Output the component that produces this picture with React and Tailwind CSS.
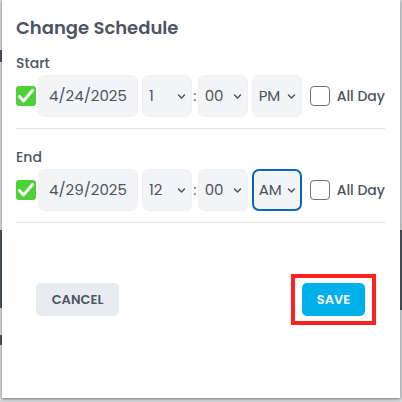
import React from "react";

const font = { fontFamily: "Poppins, 'Open Sans', 'DejaVu Sans', sans-serif" };

function Chevron() {
  return (
    <svg width="9" height="9" viewBox="0 0 9 9" className="ml-auto shrink-0">
      <path d="M1.5 3 L4.5 6 L7.5 3" fill="none" stroke="#4b5563" strokeWidth="1.5" strokeLinecap="round" strokeLinejoin="round" />
    </svg>
  );
}

function GreenCheck() {
  return (
    <div className="w-[20px] h-[20px] rounded-[3px] bg-[#4cd137] flex items-center justify-center shrink-0">
      <svg width="16" height="14" viewBox="0 0 16 14">
        <path d="M1.5 7.5 L5.5 12 L14.5 1.5" fill="none" stroke="white" strokeWidth="3" strokeLinecap="round" strokeLinejoin="round" />
      </svg>
    </div>
  );
}

function Select({ value, focused, w }) {
  return (
    <div
      className={
        focused
          ? "h-[42px] rounded-[7px] bg-[#f3f4f6] border-2 border-[#0a64c0] flex items-center pl-[5px] pr-[4px] text-[15px] text-[#4b5563] shrink-0"
          : "h-[42px] rounded-[7px] bg-[#f3f4f6] border border-[#eef0f3] flex items-center pl-[6px] pr-[5px] text-[15px] text-[#4b5563] shrink-0"
      }
      style={{ width: w }}
    >
      <span>{value}</span>
      <Chevron />
    </div>
  );
}

function Row({ date, hour, min, ampm, focused }) {
  return (
    <div className="flex items-center whitespace-nowrap">
      <GreenCheck />
      <div className="ml-[2px] w-[100px] h-[42px] rounded-[7px] bg-[#f3f4f6] border border-[#eef0f3] flex items-center pl-[10px] text-[15px] text-[#4b5563] shrink-0">
        {date}
      </div>
      <div className="ml-[4px]">
        <Select value={hour} w={50} />
      </div>
      <span className="w-[8px] text-center text-[15px] text-[#4b5563]">:</span>
      <Select value={min} w={50} />
      <div className="ml-[4px]">
        <Select value={ampm} w={50} focused={focused} />
      </div>
      <div className="ml-[8px] w-[20px] h-[20px] rounded-[4px] border border-[#6b7280] bg-white shrink-0" />
      <span className="ml-[7px] text-[14px] font-medium text-[#4b5563]">All Day</span>
    </div>
  );
}

export default function App() {
  return (
    <div className="w-[402px] h-[402px] bg-[#d9dadc] relative overflow-hidden" style={font}>
      <div className="absolute left-0 top-[50px] w-[2px] h-[12px] bg-[#4b5563]" />
      <div className="absolute left-0 top-[230px] w-[2px] h-[78px] bg-[#4b5563]" />
      <div className="absolute left-0 top-[335px] w-[2px] h-[10px] bg-[#4b5563]" />
      <div className="absolute right-0 top-[230px] w-[2px] h-[80px] bg-[#4b5563]" />
      <div className="absolute left-[2px] top-0 w-[398px] h-[398px] bg-white shadow-[0_1px_3px_rgba(0,0,0,0.45)] pl-[14px] pr-[15px] flex flex-col">
        <h1 className="mt-[16px] text-[18px] font-semibold text-[#4b5563] leading-[24px]">Change Schedule</h1>
        <div className="mt-[13px] text-[14px] font-medium text-[#4b5563] leading-[20px]">Start</div>
        <div className="mt-[2px]">
          <Row date="4/24/2025" hour="1" min="00" ampm="PM" />
        </div>
        <div className="mt-[11px] h-px bg-[#dddfe2]" />
        <div className="mt-[18px] text-[14px] font-medium text-[#4b5563] leading-[20px]">End</div>
        <div className="mt-[2px]">
          <Row date="4/29/2025" hour="12" min="00" ampm="AM" focused />
        </div>
        <div className="mt-[11px] h-px bg-[#dddfe2]" />
        <div className="mt-[51px] flex items-center justify-between pl-[20px] pr-[9px]">
          <button className="w-[83px] h-[33px] rounded-[5px] bg-[#e8ecf1] text-[13px] font-semibold text-[#4b5563]">
            CANCEL
          </button>
          <div className="border-[4px] border-[#ff2020] px-[7px] py-[5px]">
            <button className="w-[63px] h-[33px] rounded-[5px] bg-[#00b0ea] text-[13px] font-semibold text-white">
              SAVE
            </button>
          </div>
        </div>
      </div>
    </div>
  );
}
